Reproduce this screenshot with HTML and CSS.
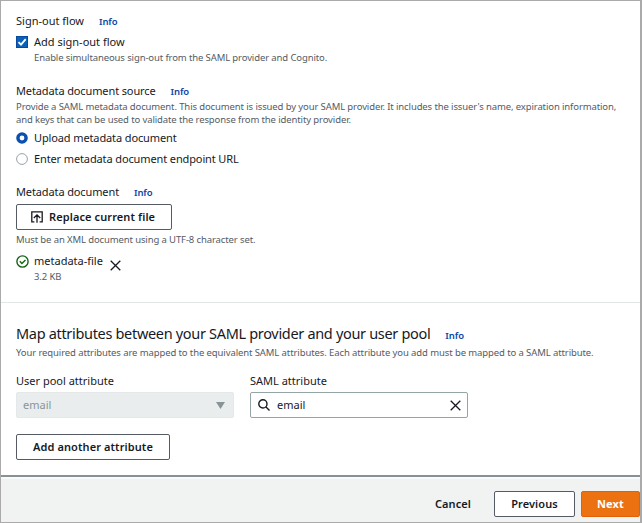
FILE: index.html
```html
<!DOCTYPE html>
<html lang="en">
<head>
<meta charset="utf-8">
<title>Add identity provider</title>
<link rel="stylesheet" href="styles.css">
</head>
<body>
<main class="page">
  <section class="provider">
    <div class="field signout">
      <div class="label-row"><span class="label">Sign-out flow</span><a class="info">Info</a></div>
      <div class="choice">
        <svg class="mark" viewBox="0 0 12 12"><rect x="0.5" y="0.5" width="11" height="11" fill="#0a62b8" stroke="#0849a0"/><path d="M2.5 6.2 5 8.7 9.7 3.2" fill="none" stroke="#fff" stroke-width="1.8"/></svg>
        <span class="label">Add sign-out flow</span>
      </div>
      <p class="hint indent">Enable simultaneous sign-out from the SAML provider and Cognito.</p>
    </div>
    <div class="field source">
      <div class="label-row"><span class="label">Metadata document source</span><a class="info">Info</a></div>
      <p class="hint">Provide a SAML metadata document. This document is issued by your SAML provider. It includes the issuer's name, expiration information,<br>and keys that can be used to validate the response from the identity provider.</p>
      <div class="choice first">
        <svg class="mark" viewBox="0 0 12 12"><circle cx="6" cy="6" r="4.1" fill="#fff" stroke="#0a50ad" stroke-width="3.4"/></svg>
        <span class="label">Upload metadata document</span>
      </div>
      <div class="choice">
        <svg class="mark" viewBox="0 0 12 12"><circle cx="6" cy="6" r="5.4" fill="#fff" stroke="#95a5a6"/></svg>
        <span class="label">Enter metadata document endpoint URL</span>
      </div>
    </div>
    <div class="field document">
      <div class="label-row"><span class="label">Metadata document</span><a class="info">Info</a></div>
      <button class="btn replace">
        <svg class="upload" viewBox="0 0 12 12" fill="none" stroke="#16191f" stroke-width="1.3"><path d="M3.4 10.9H.8V.8H11.2V10.9H8.6M6 11.7V4.2M2.8 7 6 3.9 9.2 7"/></svg>
        <span>Replace current file</span>
      </button>
      <p class="hint">Must be an XML document using a UTF-8 character set.</p>
      <div class="file">
        <svg class="ok" viewBox="0 0 13 13" fill="none" stroke="#126312" stroke-width="1.4"><circle cx="6.5" cy="6.5" r="5.6"/><path d="M3.8 6.3 5.9 8.4 9.5 4.9"/></svg>
        <div class="file-text"><span class="label name">metadata-file</span><p class="hint">3.2 KB</p></div>
        <svg class="close" viewBox="0 0 11 11" fill="none" stroke="#16191f" stroke-width="1.3"><path d="M.7.7 10.3 10.3M10.3.7.7 10.3"/></svg>
      </div>
    </div>
  </section>
  <section class="mapping">
    <div class="title-row"><h2>Map attributes between your SAML provider and your user pool</h2><a class="info">Info</a></div>
    <p class="hint">Your required attributes are mapped to the equivalent SAML attributes. Each attribute you add must be mapped to a SAML attribute.</p>
    <div class="columns">
      <div>
        <span class="label pool">User pool attribute</span>
        <div class="control disabled"><span class="label">email</span><svg class="caret" viewBox="0 0 9 7"><path d="M0 0H9L4.5 7Z" fill="#879596"/></svg></div>
      </div>
      <div>
        <span class="label saml">SAML attribute</span>
        <div class="control search">
          <svg class="lens" viewBox="0 0 12 12" fill="none" stroke="#16191f" stroke-width="1.4"><circle cx="4.9" cy="4.9" r="4.1"/><path d="M7.8 7.8 11.5 11.4"/></svg>
          <span class="label">email</span>
          <svg class="close" viewBox="0 0 11 11" fill="none" stroke="#16191f" stroke-width="1.3"><path d="M.7.7 10.3 10.3M10.3.7.7 10.3"/></svg>
        </div>
      </div>
    </div>
    <button class="btn add">Add another attribute</button>
  </section>
  <footer class="actions">
    <button class="btn cancel">Cancel</button>
    <button class="btn previous">Previous</button>
    <button class="btn next">Next</button>
  </footer>
</main>
</body>
</html>
```
FILE: styles.css
```css
* { box-sizing: border-box; }
body { margin: 0; font-family: "Noto Sans", sans-serif; color: #16191f; background: #fff; }
p, h2 { margin: 0; }
svg { display: block; flex: none; }
.page { width: 642px; height: 523px; border: 1px solid #aaa; border-right-width: 2px; display: flex; flex-direction: column; overflow: hidden; }
.provider { height: 302px; padding: 12px 0 0 15px; border-bottom: 1px solid #e3e6e6; }
.label, .pool, .saml { font-size: 11px; line-height: 16px; white-space: nowrap; }
.source .label, .document .label-row .label { letter-spacing: -0.12px; }
.label-row { display: flex; gap: 15px; height: 16px; }
.info { font-size: 9.5px; line-height: 17px; font-weight: 600; color: #0a46a8; letter-spacing: -0.1px; }
.hint { font-size: 9.5px; line-height: 13px; color: #545b64; white-space: nowrap; letter-spacing: -0.115px; }
.indent { margin: 1px 0 0 18px; }
.choice { display: flex; align-items: center; gap: 6px; height: 16px; margin-top: 5px; }
.choice.first { margin-top: 4px; }
.mark { width: 12px; height: 12px; }
.source { margin-top: 19px; }
.source .hint { margin-top: 1px; }
.document { margin-top: 17px; }
.btn { display: flex; align-items: center; justify-content: center; height: 26px; padding: 0; border: 1px solid #545b64; border-radius: 2px; background: #fff; color: #16191f; font: 600 11px/16px "Noto Sans", sans-serif; letter-spacing: 0.1px; white-space: nowrap; }
.replace { width: 156px; margin: 4px 0 3px; gap: 6px; justify-content: flex-start; padding-left: 14px; }
.upload { width: 12px; height: 12px; }
.file { display: flex; margin-top: 7px; }
.ok { width: 13px; height: 13px; margin: 2px 5px 0 0; }
.file-text .label { display: block; }
.file-text .hint { margin-top: 1px; }
.file .close { margin: 7px 0 0 7px; }
.close { width: 11px; height: 11px; }
.mapping { height: 172px; padding: 20px 0 0 15px; }
.title-row { display: flex; gap: 15px; }
h2 { font-size: 14.5px; line-height: 20px; font-weight: 400; white-space: nowrap; letter-spacing: -0.32px; }
.title-row .info { line-height: 25px; height: 20px; }
.mapping > .hint { margin-top: 3px; letter-spacing: -0.1px; }
.columns { display: flex; gap: 16px; margin-top: 14px; }
.pool, .saml { display: block; }
.control { display: flex; align-items: center; width: 218px; height: 26px; margin-top: 3px; border: 1px solid #95a5a6; border-radius: 2px; padding: 0 6px; }
.disabled { background: #eaeded; border-color: #e4e8e8; color: #879596; justify-content: space-between; padding-right: 8px; }
.caret { width: 9px; height: 7px; }
.lens { width: 12px; height: 12px; margin: 0 7px 0 1px; }
.search .close { margin-left: auto; }
.add { width: 154px; margin-top: 16px; }
.actions { flex: 1; display: flex; align-items: flex-start; justify-content: flex-end; padding-top: 14px; background: #f1f3f3; border-top: 2px solid #879196; box-shadow: inset 0 2px #fafafa; }
.cancel { border: 0; background: none; width: 40px; margin-right: 21px; }
.previous { width: 81px; margin-right: 6px; }
.next { width: 59px; background: #ec7211; border-color: #e4610a; color: #fff; font-weight: 700; }
```
